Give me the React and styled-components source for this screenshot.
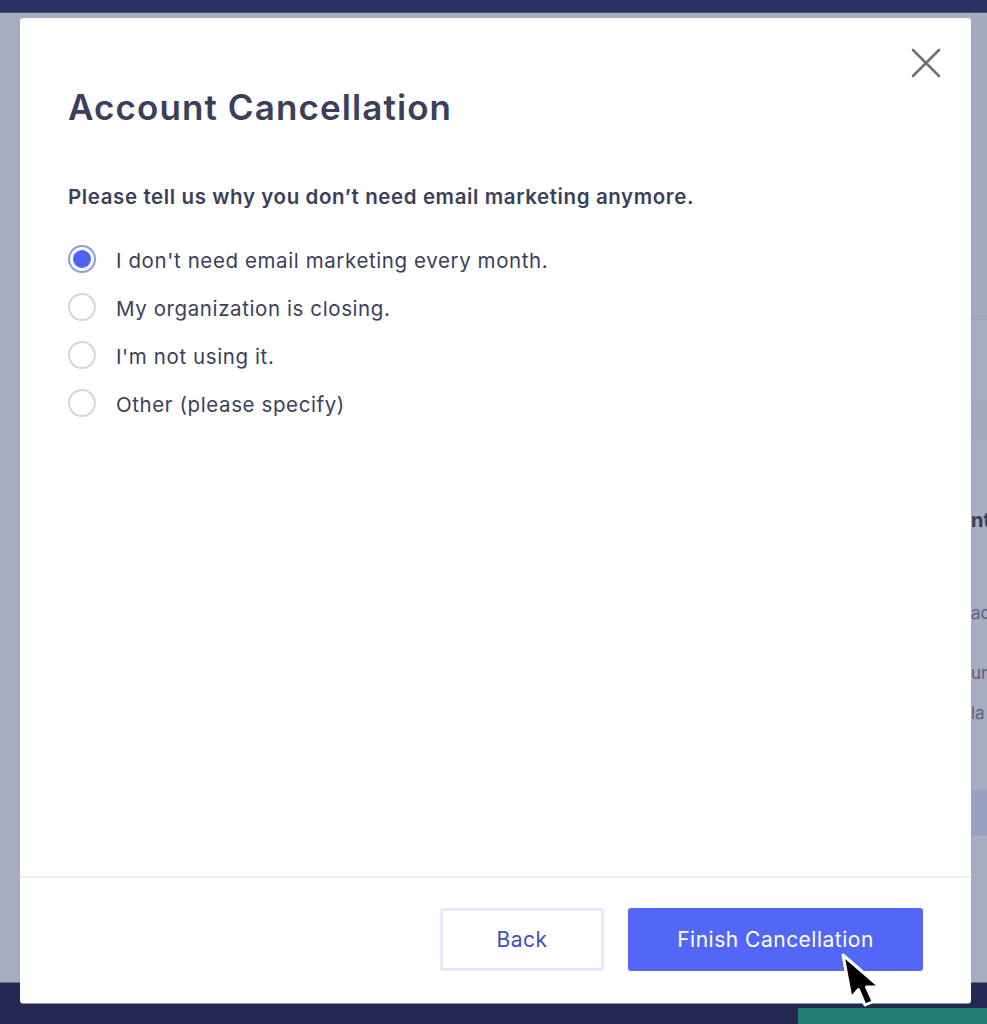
import React, { useState } from 'react';
import styled, { createGlobalStyle } from 'styled-components';

const GlobalStyle = createGlobalStyle`
  html, body {
    margin: 0;
    padding: 0;
  }
  body {
    font-family: Inter, "Liberation Sans", sans-serif;
    -webkit-font-smoothing: antialiased;
  }
`;

const Screen = styled.div`
  position: relative;
  width: 987px;
  height: 1024px;
  overflow: hidden;
  display: flex;
  flex-direction: column;
  background: #a7acc0;
`;

const TopBar = styled.div`
  height: 12px;
  background: #2c3263;
  border-bottom: 1px solid #4d5379;
  flex-shrink: 0;
`;

const Backdrop = styled.div`
  flex: 1;
  display: grid;
  grid-template-columns: 971px 1fr;
  overflow: hidden;
`;

const SidePanel = styled.div`
  grid-column: 2;
  display: flex;
  flex-direction: column;
  white-space: nowrap;
  overflow: hidden;
`;

const PanelBlock = styled.div`
  height: ${(p) => p.h}px;
  background: ${(p) => p.bg || 'transparent'};
  border-bottom: ${(p) => (p.line ? '1px solid #9ba0b5' : 'none')};
  flex-shrink: 0;
`;

const PanelHeading = styled.div`
  margin-top: 66px;
  font-size: 20px;
  font-weight: 700;
  line-height: 28px;
  color: #363b5b;
`;

const PanelText = styled.div`
  margin-top: ${(p) => p.mt}px;
  font-size: 17px;
  line-height: 24px;
  color: #5c6180;
`;

const PanelButton = styled.div`
  margin-top: 65px;
  height: 45px;
  background: #98a0c1;
`;

const BottomBar = styled.div`
  height: 41px;
  flex-shrink: 0;
  background: #222852;
  border-top: 1px solid #6b7090;
  display: flex;
  justify-content: flex-end;
  align-items: flex-end;
`;

const ChatTab = styled.div`
  width: 189px;
  height: 16px;
  background: #237f74;
`;

const Modal = styled.div`
  position: absolute;
  left: 20px;
  top: 18px;
  width: 951px;
  height: 985px;
  background: #ffffff;
  border-radius: 3px;
  box-shadow: 0 1px 0 #8c91a8;
  display: flex;
  flex-direction: column;
  color: #3b3f5c;
`;

const ModalBody = styled.div`
  flex: 1;
  display: flex;
  flex-direction: column;
`;

const Header = styled.div`
  display: flex;
  justify-content: space-between;
  align-items: flex-start;
  padding: 30px 30px 0 48px;
`;

const Title = styled.h1`
  margin: 39px 0 0;
  font-size: 35px;
  line-height: 40px;
  font-weight: 600;
  letter-spacing: 1.1px;
  color: #3b3f5c;
`;

const CloseButton = styled.button`
  width: 30px;
  height: 30px;
  padding: 0;
  border: none;
  background: none;
  cursor: pointer;
  display: flex;
  align-items: center;
  justify-content: center;
`;

const Content = styled.div`
  padding: 56px 48px 0;
`;

const Question = styled.p`
  margin: 0;
  font-size: 20.5px;
  line-height: 28px;
  font-weight: 600;
  letter-spacing: 0.6px;
  color: #3b3f5c;
`;

const Options = styled.div`
  margin-top: 34px;
  display: flex;
  flex-direction: column;
  gap: 20px;
`;

const OptionRow = styled.label`
  display: flex;
  align-items: flex-start;
  gap: 20px;
  height: 28px;
  cursor: pointer;
`;

const Radio = styled.span`
  box-sizing: border-box;
  width: 28px;
  height: 28px;
  border-radius: 50%;
  flex-shrink: 0;
  border: ${(p) => (p.checked ? '2px solid #8d99fb' : '2.5px solid #d4d5dd')};
  background: #fff;
  display: flex;
  align-items: center;
  justify-content: center;

  &::after {
    content: '';
    width: 18px;
    height: 18px;
    border-radius: 50%;
    background: #4f63f5;
    display: ${(p) => (p.checked ? 'block' : 'none')};
  }
`;

const OptionText = styled.span`
  padding-top: 5px;
  font-size: 20.5px;
  line-height: 22px;
  letter-spacing: 0.6px;
  color: #3b3f5c;
`;

const Footer = styled.div`
  border-top: 2px solid #efefef;
  padding: 30px 48px 32px;
  display: flex;
  justify-content: flex-end;
  gap: 24px;
`;

const Button = styled.button`
  box-sizing: border-box;
  height: 63px;
  width: ${(p) => p.w}px;
  border-radius: 3px;
  font-family: inherit;
  font-size: 21px;
  font-weight: 400;
  letter-spacing: 0.5px;
  cursor: pointer;
  border: ${(p) => (p.primary ? 'none' : '3px solid #e5e8fc')};
  background: ${(p) => (p.primary ? '#5367f6' : '#ffffff')};
  color: ${(p) => (p.primary ? '#ffffff' : '#4051bd')};
`;

const Cursor = styled.svg`
  position: absolute;
  left: 836px;
  top: 948px;
  pointer-events: none;
`;

const reasons = [
  "I don't need email marketing every month.",
  'My organization is closing.',
  "I'm not using it.",
  'Other (please specify)',
];

export default function App() {
  const [selected, setSelected] = useState(0);

  return (
    <>
      <GlobalStyle />
      <Screen>
        <TopBar />
        <Backdrop>
          <SidePanel>
            <PanelBlock h={306} bg="#a4a9be" line />
            <PanelBlock h={80} />
            <PanelBlock h={40} bg="#a3a8bd" />
            <PanelHeading>nt</PanelHeading>
            <PanelText mt={67}>ac</PanelText>
            <PanelText mt={36}>ur</PanelText>
            <PanelText mt={16}>la</PanelText>
            <PanelButton />
          </SidePanel>
        </Backdrop>
        <BottomBar>
          <ChatTab />
        </BottomBar>

        <Modal>
          <ModalBody>
            <Header>
              <Title>Account Cancellation</Title>
              <CloseButton aria-label="Close">
                <svg width="30" height="30" viewBox="0 0 30 30">
                  <path d="M2 2 L28 28 M28 2 L2 28" stroke="#6f7179" strokeWidth="2.6" strokeLinecap="round" />
                </svg>
              </CloseButton>
            </Header>
            <Content>
              <Question>Please tell us why you don’t need email marketing anymore.</Question>
              <Options>
                {reasons.map((r, i) => (
                  <OptionRow key={r} onClick={() => setSelected(i)}>
                    <Radio checked={selected === i} />
                    <OptionText>{r}</OptionText>
                  </OptionRow>
                ))}
              </Options>
            </Content>
          </ModalBody>
          <Footer>
            <Button w={164}>Back</Button>
            <Button w={295} primary>Finish Cancellation</Button>
          </Footer>
        </Modal>

        <Cursor width="52" height="66" viewBox="0 0 52 66">
          <path
            d="M7 7 L15 50 L22.5 41.5 L29 57 L37 53.5 L30.5 39 L44 39 Z"
            fill="#000"
            stroke="#fff"
            strokeWidth="3"
            strokeLinejoin="round"
          />
        </Cursor>
      </Screen>
    </>
  );
}
